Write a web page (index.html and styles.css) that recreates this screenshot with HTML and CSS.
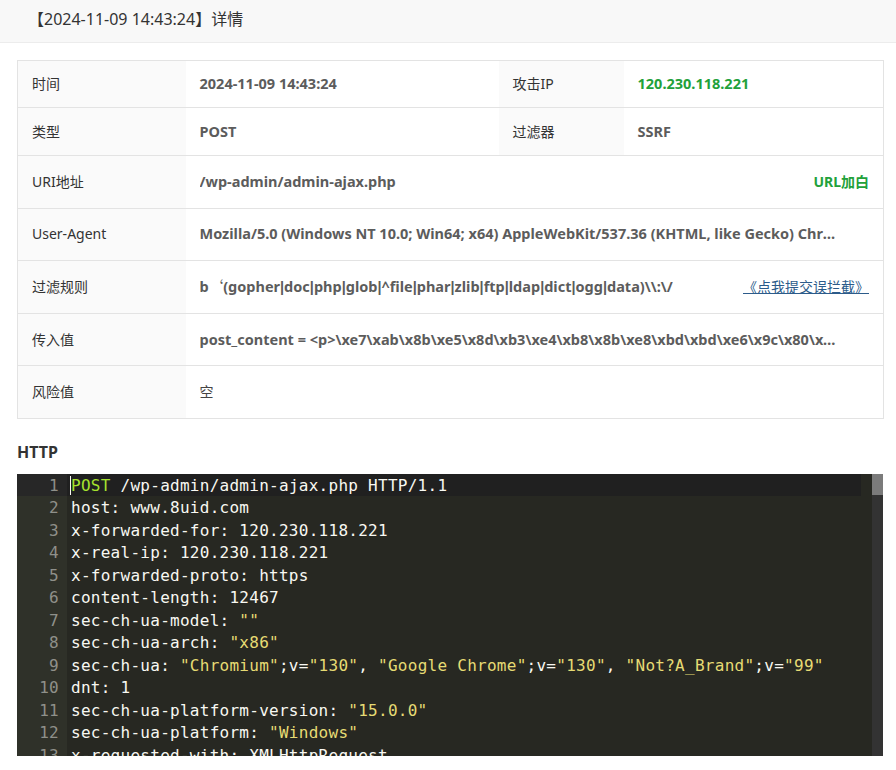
FILE: index.html
```html
<!DOCTYPE html>
<html lang="zh-CN">
<head>
<meta charset="utf-8">
<title>详情</title>
<link rel="stylesheet" href="styles.css">
</head>
<body>
<header class="page-head">
  <h1 class="page-title">【2024-11-09 14:43:24】详情</h1>
</header>
<main class="content">
  <table class="info">
    <colgroup>
      <col class="c-label1"><col class="c-value1"><col class="c-label2"><col class="c-value2">
    </colgroup>
    <tr class="r-short">
      <th>时间</th><td class="val">2024-11-09 14:43:24</td>
      <th>攻击IP</th><td class="val green">120.230.118.221</td>
    </tr>
    <tr class="r-short2">
      <th>类型</th><td class="val">POST</td>
      <th>过滤器</th><td class="val">SSRF</td>
    </tr>
    <tr class="r-tall">
      <th>URI地址</th>
      <td colspan="3" class="val"><div class="cell-flex"><span class="trunc">/wp-admin/admin-ajax.php</span><a class="act-green">URL加白</a></div></td>
    </tr>
    <tr class="r-tall">
      <th>User-Agent</th>
      <td colspan="3" class="val"><div class="cell-flex"><span class="trunc">Mozilla/5.0 (Windows NT 10.0; Win64; x64) AppleWebKit/537.36 (KHTML, like Gecko) Chrome/130.0.0.0 Safari/537.36</span></div></td>
    </tr>
    <tr class="r-tall">
      <th>过滤规则</th>
      <td colspan="3" class="val"><div class="cell-flex"><span class="trunc">b<span class="cjk">‘</span>(gopher<span class="pipe">|</span>doc<span class="pipe">|</span>php<span class="pipe">|</span>glob<span class="pipe">|</span>^file<span class="pipe">|</span>phar<span class="pipe">|</span>zlib<span class="pipe">|</span>ftp<span class="pipe">|</span>ldap<span class="pipe">|</span>dict<span class="pipe">|</span>ogg<span class="pipe">|</span>data)\\:\/</span><a class="act-link">《点我提交误拦截》</a></div></td>
    </tr>
    <tr class="r-tall">
      <th>传入值</th>
      <td colspan="3" class="val"><div class="cell-flex"><span class="trunc">post_content = &lt;p&gt;\xe7\xab\x8b\xe5\x8d\xb3\xe4\xb8\x8b\xe8\xbd\xbd\xe6\x9c\x80\xe6\x96\xb0\xe7\x89\x88\xe6\x9c\xac</span></div></td>
    </tr>
    <tr class="r-tall">
      <th>风险值</th>
      <td colspan="3" class="val plain">空</td>
    </tr>
  </table>

  <h2 class="sec-title">HTTP</h2>

  <div class="editor">
    <div class="gutter">
      <div class="gl active">1</div>
      <div class="gl">2</div>
      <div class="gl">3</div>
      <div class="gl">4</div>
      <div class="gl">5</div>
      <div class="gl">6</div>
      <div class="gl">7</div>
      <div class="gl">8</div>
      <div class="gl">9</div>
      <div class="gl">10</div>
      <div class="gl">11</div>
      <div class="gl">12</div>
      <div class="gl">13</div>
    </div>
    <div class="code">
      <div class="ln active"><span class="cursor"></span><span class="kw">POST</span> /wp-admin/admin-ajax.php HTTP/1.1</div>
      <div class="ln">host: www.8uid.com</div>
      <div class="ln">x-forwarded-for: 120.230.118.221</div>
      <div class="ln">x-real-ip: 120.230.118.221</div>
      <div class="ln">x-forwarded-proto: https</div>
      <div class="ln">content-length: 12467</div>
      <div class="ln">sec-ch-ua-model: <span class="str">""</span></div>
      <div class="ln">sec-ch-ua-arch: <span class="str">"x86"</span></div>
      <div class="ln">sec-ch-ua: <span class="str">"Chromium"</span>;v=<span class="str">"130"</span>, <span class="str">"Google Chrome"</span>;v=<span class="str">"130"</span>, <span class="str">"Not?A_Brand"</span>;v=<span class="str">"99"</span></div>
      <div class="ln">dnt: 1</div>
      <div class="ln">sec-ch-ua-platform-version: <span class="str">"15.0.0"</span></div>
      <div class="ln">sec-ch-ua-platform: <span class="str">"Windows"</span></div>
      <div class="ln">x-requested-with: XMLHttpRequest</div>
    </div>
    <div class="vscroll"><div class="thumb"></div></div>
  </div>
</main>
</body>
</html>
```

FILE: styles.css
```css
html, body {
  margin: 0;
  padding: 0;
  background: #fff;
}
body {
  font-family: "Noto Sans", "Noto Sans CJK SC", sans-serif;
  color: #333;
}
.page-head {
  background: #f8f8f8;
  border-bottom: 1px solid #ececec;
  height: 42px;
  display: flex;
  align-items: center;
  padding-left: 28px;
}
.page-title {
  margin: 0;
  font-size: 16px;
  font-weight: 400;
  color: #333;
  line-height: 20px;
  padding-bottom: 4px;
}
.content {
  margin-left: 17px;
  width: 866px;
}
.info {
  margin-top: 17px;
  width: 866px;
  border-collapse: collapse;
  table-layout: fixed;
  border: 1px solid #e3e3e3;
  font-size: 14px;
}
.c-label1 { width: 168px; }
.c-value1 { width: 313px; }
.c-label2 { width: 125px; }
.c-value2 { width: 260px; }
.info tr { border-bottom: 1px solid #e3e3e3; }
.r-short { height: 47px; }
.r-short2 { height: 48px; }
.r-tall { height: 52.6px; }
.info th {
  background: #fafafa;
  font-weight: 400;
  text-align: left;
  padding: 0 14px;
  color: #333;
  padding-bottom: 2px;
}
.info td {
  padding: 0 14px 2px 14px;
}
.val {
  font-weight: 700;
  font-size: 14.5px;
  color: #5c5c5c;
}
.val.plain { font-weight: 400; color: #444; font-size: 14px; }
.green { color: #22a13a; }
.cell-flex {
  display: flex;
  align-items: center;
  justify-content: space-between;
}
.trunc {
  max-width: 636px;
  white-space: nowrap;
  overflow: hidden;
  text-overflow: ellipsis;
}
.cjk {
  font-family: "Noto Sans CJK SC", sans-serif;
  font-weight: 400;
}
.pipe {
  font-family: "Liberation Sans", sans-serif;
}
.act-green {
  color: #22a13a;
  font-weight: 700;
  font-size: 14px;
}
.act-link {
  color: #2c5b8a;
  font-weight: 400;
  font-size: 14px;
  text-decoration: underline;
}
.sec-title {
  margin: 23px 0 12px;
  font-size: 16px;
  font-weight: 700;
  color: #333;
  line-height: 20px;
}
.editor {
  display: flex;
  height: 282px;
  overflow: hidden;
  background: #272822;
  font-family: "DejaVu Sans Mono", monospace;
  font-size: 16px;
  letter-spacing: 0.27px;
  line-height: 22.5px;
}
.gutter {
  width: 50px;
  flex: none;
  background: #2f3129;
  color: #8f908a;
  text-align: right;
}
.gl {
  padding: 1px 8px 0 0;
  height: 22.5px;
  box-sizing: border-box;
}
.gl.active { background: #272727; }
.code {
  flex: 1;
  color: #f8f8f2;
  padding-right: 11px;
}
.ln {
  padding: 1px 0 0 4px;
  height: 22.5px;
  box-sizing: border-box;
  white-space: pre;
  position: relative;
}
.ln.active { background: #202020; }
.cursor {
  position: absolute;
  left: 3px;
  top: 2px;
  width: 1px;
  height: 19px;
  background: #f8f8f0;
}
.kw { color: #a6e22e; }
.str { color: #e6db74; }
.vscroll {
  width: 11px;
  flex: none;
  background: #333;
}
.thumb {
  height: 21px;
  background: #7b7b7b;
}
```
